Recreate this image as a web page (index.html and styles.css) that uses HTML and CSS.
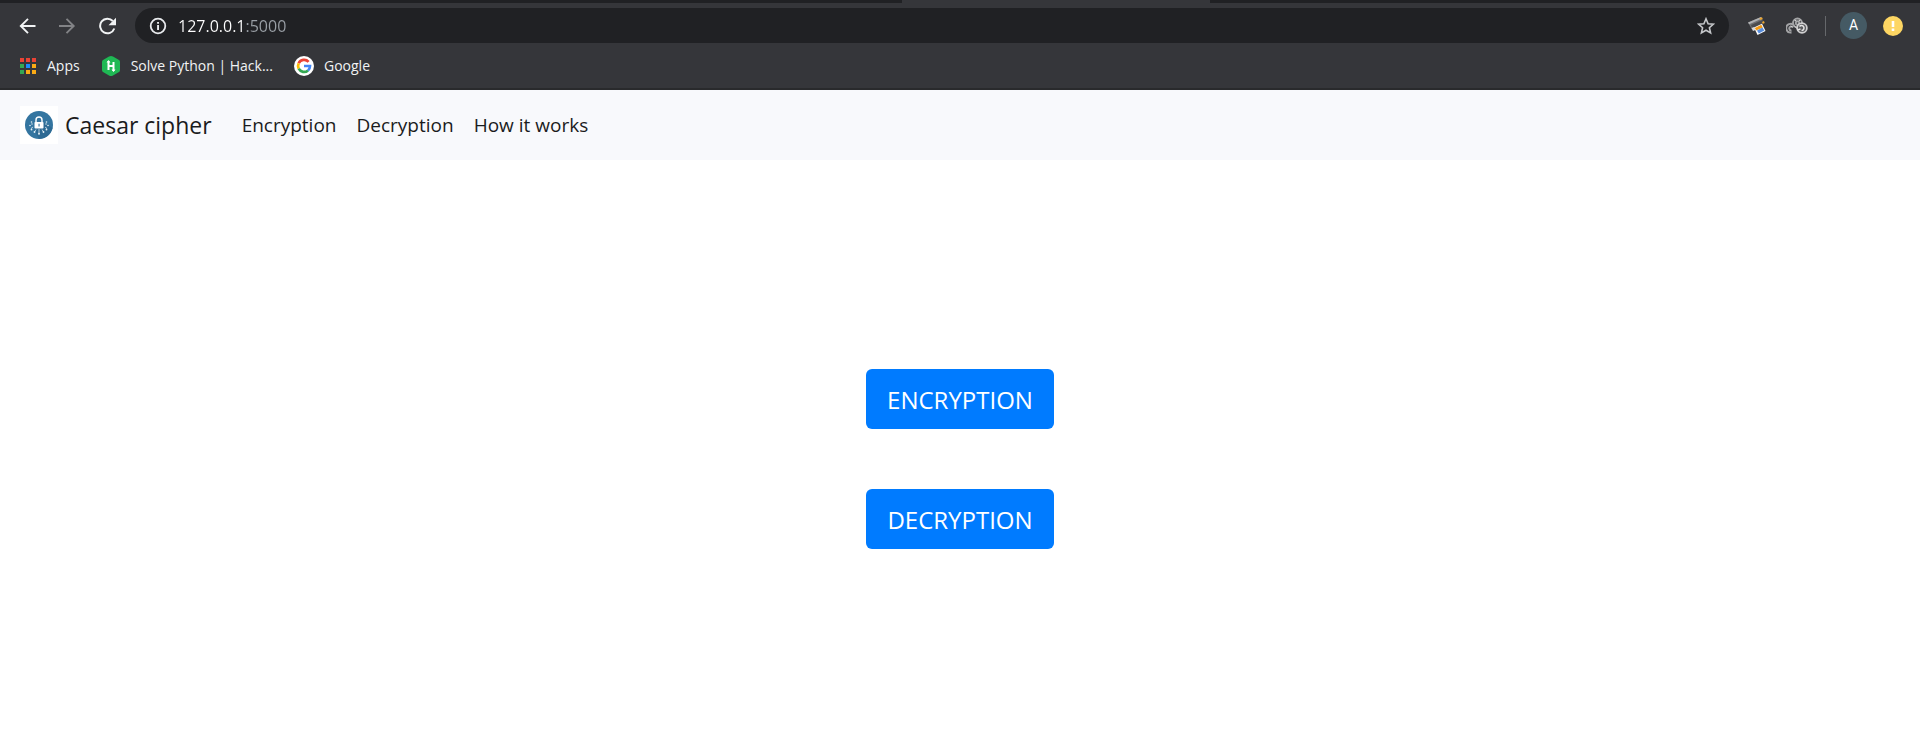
FILE: index.html
```html
<!DOCTYPE html>
<html lang="en">
<head>
<meta charset="utf-8">
<meta name="viewport" content="width=device-width, initial-scale=1">
<title>Caesar cipher</title>
<link rel="stylesheet" href="styles.css">
</head>
<body>
<header class="browser">
  <div class="tabstrip"><div class="active-tab"></div></div>
  <div class="toolbar">
    <button class="tool back" aria-label="Back"><svg width="18" height="18" viewBox="0 0 18 18"><path d="M17.500 9H3M10 1.800 2.800 9l7.200 7.200" fill="none" stroke="currentColor" stroke-width="1.900"/></svg></button>
    <button class="tool forward" aria-label="Forward"><svg width="18" height="18" viewBox="0 0 18 18"><path d="M1 9h15M8.500 1.800 15.700 9l-7.200 7.200" fill="none" stroke="currentColor" stroke-width="1.900"/></svg></button>
    <button class="tool reload" aria-label="Reload"><svg width="18" height="18" viewBox="0 0 18 18"><path d="M16.300 11.500A7.300 7.300 0 1 1 14.800 4" fill="none" stroke="currentColor" stroke-width="2"/><path d="M18 .7v7.500h-7.500z" fill="currentColor"/></svg></button>
    <form class="address">
      <svg class="info" width="18" height="18" viewBox="0 0 18 18"><circle cx="9" cy="9" r="7.300" fill="none" stroke="#e8eaed" stroke-width="1.800"/><path d="M8.100 8h1.900v5H8.100zM8.100 5h1.900v1.800H8.100z" fill="#e8eaed"/></svg>
      <input class="url" type="text" value="127.0.0.1:5000" aria-label="Address">
      <button class="tool star" type="button" aria-label="Bookmark this page"><svg width="18" height="18" viewBox="0 0 18 18"><path d="m9 1.800 2.100 4.900 5.300.5-4 3.500 1.200 5.200L9 13.200l-4.600 2.700 1.200-5.200-4-3.500 5.300-.5z" fill="none" stroke="currentColor" stroke-width="1.600"/></svg></button>
    </form>
    <div class="extensions">
      <button class="tool" aria-label="Printer extension"><svg width="20" height="20" viewBox="0 0 20 20"><path d="m1 6.500 13-5.500 3.500 6-12.500 6.500z" fill="#6f7073"/><path d="m1 6.500 13-5.500 1 1.600L2.200 8.300z" fill="#b0b1b3"/><path d="m4 9 12-5.200 1.300 3.500L5.500 13z" fill="#4b4c4f"/><path d="m12.500 2.300 2.500-1 .8 1.600-2.500 1z" fill="#eda62c"/><path d="m15 6 2-.9.600 1.900-1.800.8z" fill="#eda62c"/><path d="m4.500 12 1.500 3 2.500-1-1.500-3z" fill="#d7d8da"/><path d="m7 11.500 8-3.700L18.500 15 10.500 19z" fill="#fff"/><path d="m7.800 12 6.500-3.200 1.500 2.600-6.500 3z" fill="#f59b16"/><path d="m10 14.500 5.500-2.900 1.800 3-5.500 3z" fill="#5a8fdd"/></svg></button>
      <button class="tool" aria-label="Knots extension"><svg width="22" height="20" viewBox="0 0 22 20"><g fill="none" stroke="#a2a3a5" stroke-width="1.900"><path d="M5.500 16.500a4.400 4.400 0 1 1 3-6.500M5.500 14.500a2 2 0 1 1 1.500-3"/><circle cx="11.500" cy="7" r="4.500"/><circle cx="11.500" cy="7" r="1.700"/></g><circle cx="16" cy="12" r="4.900" fill="#5c5d60" stroke="#cfcfd0" stroke-width="1.700"/><path d="M13.500 10.500a2.500 2.500 0 1 1 2 4M11.500 14l3-1" fill="none" stroke="#e4e4e4" stroke-width="1.500"/><path d="m8.500 4 2 1m4-1-2 1m-8 5 2 1m2-1 3 3" stroke="#d0d0d0"/></svg></button>
    </div>
    <span class="divider"></span>
    <button class="avatar" aria-label="Profile A">A</button>
    <button class="update" aria-label="Update available"><svg width="20" height="20" viewBox="0 0 20 20"><circle cx="10" cy="10" r="10" fill="#fdd663"/><path d="M8.700 5h2.600v6H8.700zM8.700 12.500h2.600V15H8.700z" fill="#fff"/></svg></button>
  </div>
  <nav class="bookmarks" aria-label="Bookmarks">
    <a class="bookmark apps" href="#"><svg width="18" height="18" viewBox="0 0 18 18"><path d="M1 1h4v4H1zM7 1h4v4H7zM13 1h4v4h-4z" fill="#ea4335"/><path d="M1 7h4v4H1zM1 13h4v4H1z" fill="#34a853"/><path d="M7 7h4v4H7z" fill="#1a8cff"/><path d="M7 13h4v4H7zM13 7h4v4h-4zM13 13h4v4h-4z" fill="#fbab15"/></svg>Apps</a>
    <a class="bookmark" href="#"><svg width="20" height="20" viewBox="0 0 20 20"><path d="M10 0q1 0 2 .6l6 3.400q1 .7 1 2v8q0 1.300-1 2l-6 3.400q-2 1.200-4 0L2 16q-1-.7-1-2V6q0-1.300 1-2L8 .6Q9 0 10 0z" fill="#1fb854"/><path d="M7.500 5v9M12.500 6v9M7.500 10h5" fill="none" stroke="#fff" stroke-width="2"/><path d="m5.500 6.500 2-2.500 2 2.500zM10.500 13.500l2 2.500 2-2.500z" fill="#fff"/></svg>Solve Python | Hack...</a>
    <a class="bookmark" href="#"><svg width="20" height="20" viewBox="0 0 20 20"><circle cx="10" cy="10" r="10" fill="#fff"/><g fill="none" stroke-width="2.700"><path d="M14.600 5.800A6 6 0 0 0 4.700 7.300" stroke="#ea4335"/><path d="M4.700 7.300a6 6 0 0 0 0 5.400" stroke="#fbbc05"/><path d="M4.700 12.700a6 6 0 0 0 9.300 1.700" stroke="#34a853"/><path d="M14 14.400A6 6 0 0 0 16 10h-6" stroke="#4285f4"/></g></svg>Google</a>
  </nav>
</header>
<nav class="navbar" aria-label="Main">
  <a class="brand" href="#">
    <svg width="38" height="38" viewBox="0 0 38 38"><path d="M0 0h38v38H0z" fill="#fff"/><circle cx="19" cy="19" r="14" fill="#3475a0"/><path d="m23.500 16 9 6A14 14 0 0 1 19 33l-5-10z" fill="#2d6a94"/><path d="M16 16v-2a3 3 0 0 1 6 0v2" fill="none" stroke="#fff" stroke-width="1.400"/><rect x="14.500" y="16" width="9" height="6.500" rx=".8" fill="#fff"/><path d="M18.500 17.800h1.100v2.600h-1.100z" fill="#3475a0"/><path d="M19 23v4M16 23.500 14.500 26M22 23.500l1.500 2.500M13 21l-2 1.500M25 21l2 1.500M13 18h-2M25 18h2" stroke="#d7e7f0" stroke-width=".8"/><g fill="#e5f0f6"><circle cx="19" cy="27.800" r="1"/><circle cx="14.500" cy="26" r=".9"/><circle cx="23.500" cy="26" r=".9"/><circle cx="11.500" cy="23.500" r=".9"/><circle cx="26.500" cy="23.500" r=".9"/><circle cx="10" cy="19.500" r=".8"/><circle cx="28" cy="19.500" r=".8"/><circle cx="11.500" cy="16" r=".8"/><circle cx="26.500" cy="16" r=".8"/></g></svg>
    Caesar cipher
  </a>
  <div class="links">
    <a href="#encrypt">Encryption</a>
    <a href="#decrypt">Decryption</a>
    <a href="#how">How it works</a>
  </div>
</nav>
<main class="actions">
  <button class="action">ENCRYPTION</button>
  <button class="action">DECRYPTION</button>
</main>
</body>
</html>
```
FILE: styles.css
```css
* { box-sizing: border-box; }
body {
  margin: 0;
  min-height: 100vh;
  display: flex;
  flex-direction: column;
  background: #fff;
  font-family: "Open Sans", "Noto Sans", sans-serif;
}
button { font: inherit; border: 0; padding: 0; cursor: pointer; }
a { color: inherit; text-decoration: none; }
svg { display: block; flex: none; }

.browser { background: #35363a; border-bottom: 2px solid #292a2c; }
.tabstrip { display: flex; height: 3px; background: #202124; }
.active-tab {
  width: 16%;
  margin-left: 47%;
  background: #35363a;
}
.toolbar {
  display: flex;
  align-items: center;
  height: 45px;
  padding: 0 17px 0 18px;
}
.tool { display: flex; background: none; color: #f1f3f4; }
.back, .forward { margin-right: 22px; }
.forward { color: #828386; }
.reload { margin-right: 19px; }
.address {
  flex: 1;
  display: flex;
  align-items: center;
  height: 35px;
  padding: 0 14px;
  background: #202124;
  border-radius: 18px;
}
.url {
  flex: 1;
  min-width: 0;
  margin-left: 11px;
  padding: 0;
  border: 0;
  outline: 0;
  font: 16px/24px "Open Sans", "Noto Sans", sans-serif;
  color: transparent;
  background: linear-gradient(90deg, #fff 68px, #9aa0a6 68px);
  background-clip: text;
  -webkit-background-clip: text;
}
.star { color: #c4c6c9; }
.extensions { display: flex; gap: 19px; margin-left: 18px; }
.divider { width: 1px; height: 20px; margin: 0 14px 0 17px; background: #66686b; }
.avatar {
  width: 27px;
  height: 27px;
  border-radius: 50%;
  background: #455a64;
  color: #fff;
  font: 14px/27px Roboto, sans-serif;
}
.update { margin-left: 16px; background: none; }
.bookmarks {
  display: flex;
  align-items: center;
  gap: 21px;
  height: 40px;
  padding: 0 19px 5px;
  color: #f1f3f4;
  font-size: 14px;
}
.bookmark { display: flex; align-items: center; gap: 10px; white-space: nowrap; }

.navbar {
  display: flex;
  align-items: center;
  padding: 16px 20px;
  background: #f8f9fc;
  color: #1b1c1d;
}
.brand { display: flex; align-items: center; gap: 7px; font-size: 23px; line-height: 38px; }
.links { display: flex; gap: 20px; margin-left: 30px; font-size: 19px; line-height: 28px; }

.actions {
  flex: 1;
  display: flex;
  flex-direction: column;
  align-items: center;
  justify-content: center;
  gap: 60px;
  padding-top: 24px;
}
.action {
  height: 60px;
  padding: 0 21px;
  border-radius: 6px;
  background: #007bff;
  color: #fff;
  font-size: 24px;
}
```
